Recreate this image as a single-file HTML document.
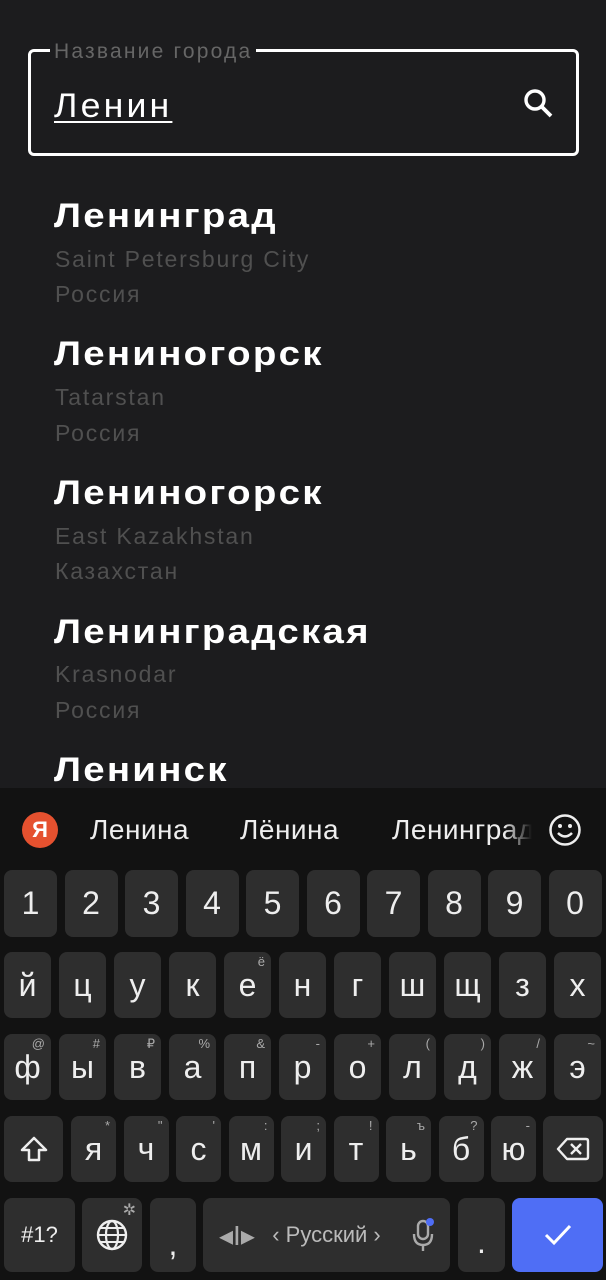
<!DOCTYPE html>
<html><head><meta charset="utf-8"><style>
*{margin:0;padding:0;box-sizing:border-box}
body{width:606px;height:1280px;background:#1c1c1e;position:relative;overflow:hidden;font-family:"Liberation Sans","Noto Sans CJK SC",sans-serif}
.box{position:absolute;left:28px;top:49px;width:551px;height:107px;border:3px solid #fff;border-radius:6px}
.lbl{position:absolute;left:50px;top:39px;background:#1c1c1e;padding:0 4px;color:#666;font-size:21px;letter-spacing:2.2px;line-height:26px}
.inp{position:absolute;left:54px;top:86px;color:#fff;font-size:34px;letter-spacing:3px;text-decoration:underline;text-decoration-thickness:2px;text-underline-offset:4px;line-height:40px;transform:scaleX(1.05);transform-origin:left}
.t{position:absolute;left:54px;color:#fff;font-size:34px;font-weight:bold;letter-spacing:2px;line-height:40px;transform:scaleX(1.13);transform-origin:left}
.s{position:absolute;left:55px;color:#505050;font-size:23px;letter-spacing:1.8px;line-height:28px}
.kb{position:absolute;left:0;top:788px;width:606px;height:492px;background:#121212}
.k{position:absolute;background:#2e2e2e;border-radius:8px;color:#eee;font-size:32px;display:flex;align-items:center;justify-content:center}
.k i{position:absolute;right:6px;top:2px;font-style:normal;font-size:13px;color:#aaa}
.sg{position:absolute;top:812px;color:#eee;font-size:28px;letter-spacing:0.5px;line-height:36px}
</style></head><body>
<div class="box"></div>
<div class="lbl">Название города</div>
<div class="inp">Ленин</div>
<svg style="position:absolute;left:521px;top:86px" width="34" height="34" viewBox="0 0 34 34"><circle cx="14" cy="14" r="9" fill="none" stroke="#fff" stroke-width="3.4"/><line x1="20" y1="20" x2="30" y2="30" stroke="#fff" stroke-width="3.8"/></svg>

<div class="t" style="top:196px">Ленинград</div>
<div class="s" style="top:245px">Saint Petersburg City</div>
<div class="s" style="top:280px">Россия</div>
<div class="t" style="top:334px">Лениногорск</div>
<div class="s" style="top:383px">Tatarstan</div>
<div class="s" style="top:419px">Россия</div>
<div class="t" style="top:473px">Лениногорск</div>
<div class="s" style="top:522px">East Kazakhstan</div>
<div class="s" style="top:557px">Казахстан</div>
<div class="t" style="top:612px">Ленинградская</div>
<div class="s" style="top:660px">Krasnodar</div>
<div class="s" style="top:696px">Россия</div>
<div class="t" style="top:750px">Ленинск</div>

<div class="kb"></div>
<div style="position:absolute;left:22px;top:812px;width:36px;height:36px;border-radius:50%;background:#e5512f;color:#fff;font-size:22px;font-weight:bold;text-align:center;line-height:36px">Я</div>
<div class="sg" style="left:90px">Ленина</div>
<div class="sg" style="left:240px">Лёнина</div>
<div class="sg" style="left:392px;width:140px;overflow:hidden;white-space:nowrap;-webkit-mask-image:linear-gradient(90deg,#000 80%,transparent)">Ленинград</div>
<svg style="position:absolute;left:548px;top:813px" width="34" height="34" viewBox="0 0 34 34"><circle cx="17" cy="17" r="14.5" fill="none" stroke="#eee" stroke-width="2.5"/><circle cx="12" cy="13" r="2" fill="#eee"/><circle cx="22" cy="13" r="2" fill="#eee"/><path d="M10 20 Q17 27 24 20" fill="none" stroke="#eee" stroke-width="2.5"/></svg>

<div id="keys"></div>
<script>
var h='';
function k(x,y,w,hh,t,hint,st){h+='<div class="k" style="left:'+x+'px;top:'+y+'px;width:'+w+'px;height:'+hh+'px;'+(st||'')+'">'+t+(hint?'<i>'+hint+'</i>':'')+'</div>';}
'1234567890'.split('').forEach(function(c,i){k(4+i*60.5,870,53,67,c);});
var r2='йцукенгшщзх'.split(''),h2=['','','','','ё','','','','','',''];
r2.forEach(function(c,i){k(4+i*55,952,47,66,c,h2[i]);});
var r3='фывапролджэ'.split(''),h3=['@','#','₽','%','&','-','+','(',')','/','~'];
r3.forEach(function(c,i){k(4+i*55,1034,47,66,c,h3[i]);});
k(4,1116,59,66,'<svg width="30" height="30" viewBox="0 0 30 30"><path d="M15 4 L27 16 H20 V26 H10 V16 H3 Z" fill="none" stroke="#eee" stroke-width="2.5" stroke-linejoin="round"/></svg>');
var r4='ячсмитьбю'.split(''),h4=['*','"',"'",':',';','!','ъ','?','-'];
r4.forEach(function(c,i){k(71+i*52.5,1116,45,66,c,h4[i]);});
k(543,1116,60,66,'<svg width="34" height="26" viewBox="0 0 34 26"><path d="M11 3 H30 Q32 3 32 5 V21 Q32 23 30 23 H11 L2 13 Z" fill="none" stroke="#eee" stroke-width="2.4" stroke-linejoin="round"/><path d="M15 8 L25 18 M25 8 L15 18" stroke="#eee" stroke-width="2.4"/></svg>');
k(4,1198,71,74,'#1?','','font-size:22px');
k(82,1198,60,74,'<svg width="34" height="34" viewBox="0 0 34 34"><circle cx="17" cy="17" r="14" fill="none" stroke="#eee" stroke-width="2.4"/><ellipse cx="17" cy="17" rx="6" ry="14" fill="none" stroke="#eee" stroke-width="2.2"/><path d="M3 17 H31 M5 10 H29 M5 24 H29" stroke="#eee" stroke-width="2"/></svg>','<span style="font-size:16px">✲</span>');
k(150,1198,46,74,'<span style="margin-top:18px">,</span>');
k(203,1198,247,74,'<span style="position:absolute;left:16px;font-size:28px;color:#aaa">◂I▸</span><span style="font-size:22px;color:#bbb">‹ Русский ›</span><svg style="position:absolute;right:14px" width="26" height="34" viewBox="0 0 26 34"><rect x="8" y="3" width="10" height="18" rx="5" fill="none" stroke="#aaa" stroke-width="2.4"/><path d="M4 16 Q4 27 13 27 Q22 27 22 16 M13 27 V33" fill="none" stroke="#aaa" stroke-width="2.4"/><circle cx="20" cy="4" r="4" fill="#4f6df5"/></svg>','','justify-content:center');
k(458,1198,47,74,'<span style="margin-top:14px">.</span>');
k(512,1198,91,74,'<svg width="30" height="24" viewBox="0 0 30 24"><path d="M3 12 L11 20 L27 3" fill="none" stroke="#fff" stroke-width="3"/></svg>','','background:#4f6ef5');
document.getElementById('keys').innerHTML=h;
</script>
</body></html>
